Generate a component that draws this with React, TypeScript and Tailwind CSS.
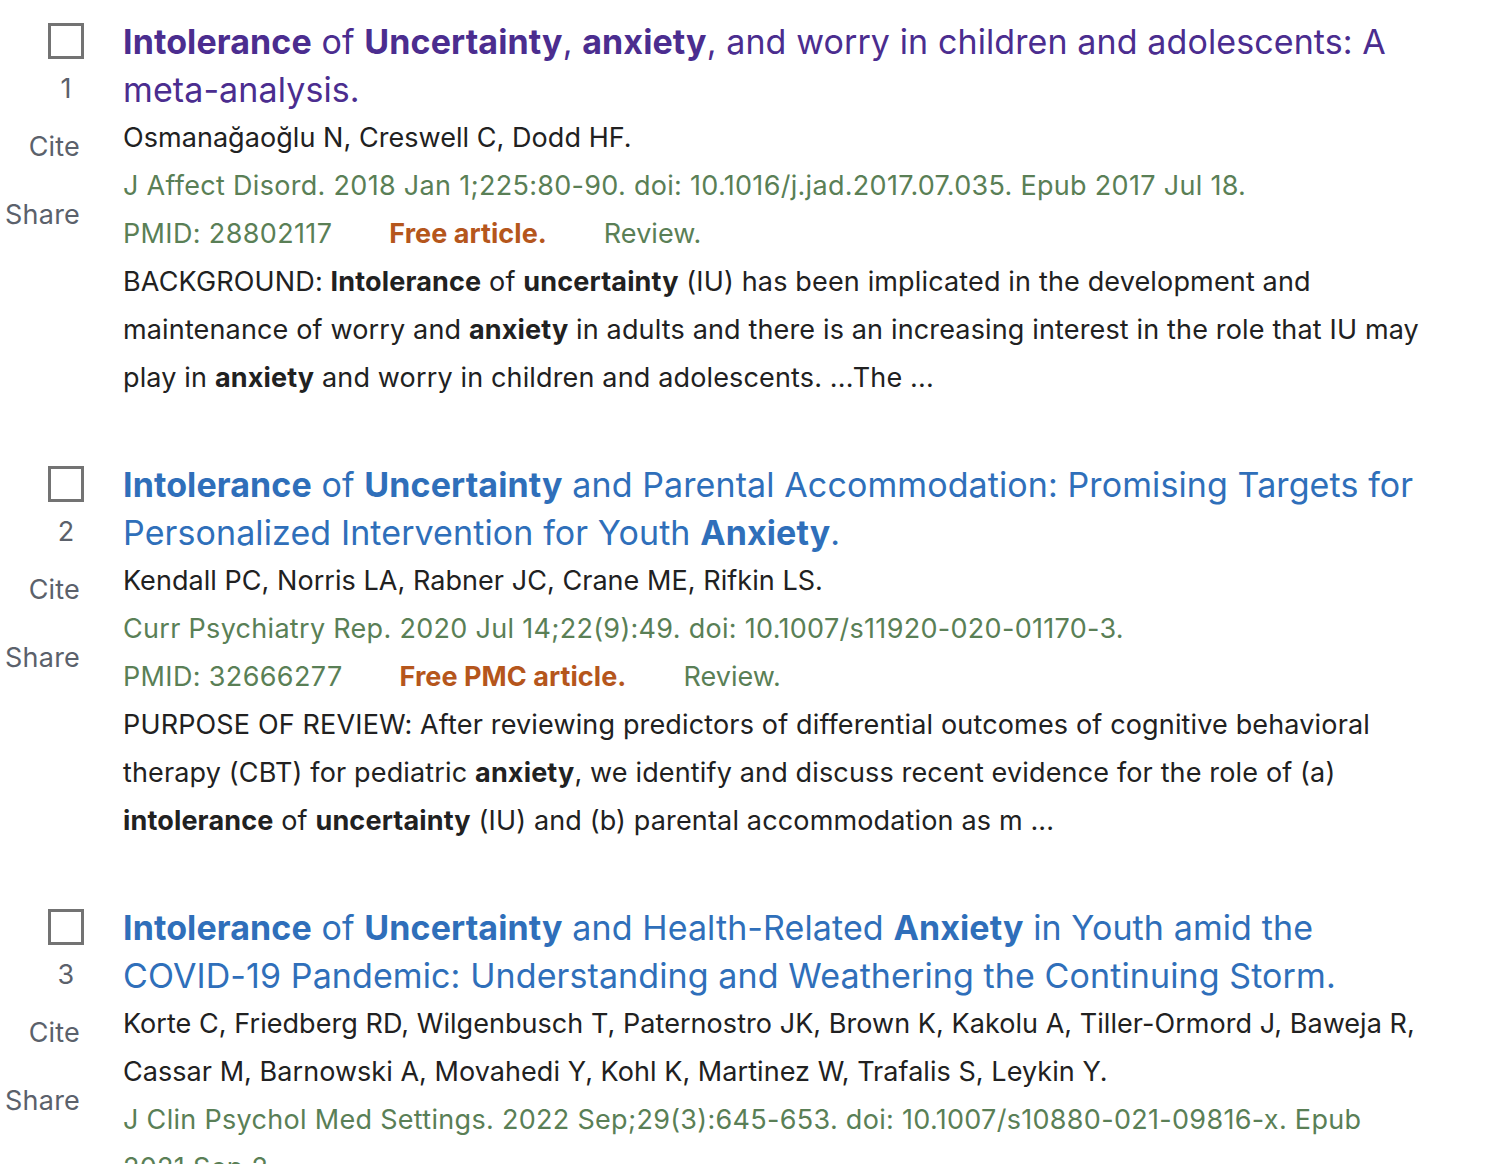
import React from "react";

type Part = string | { b: string };

type Doc = {
  n: number;
  visited?: boolean;
  title: Part[];
  authors: string;
  citation: string;
  pmid?: string;
  free?: string;
  review?: boolean;
  snippet?: Part[];
};

const docs: Doc[] = [
  {
    n: 1,
    visited: true,
    title: [{ b: "Intolerance" }, " of ", { b: "Uncertainty" }, ", ", { b: "anxiety" }, ", and worry in children and adolescents: A meta-analysis."],
    authors: "Osmanağaoğlu N, Creswell C, Dodd HF.",
    citation: "J Affect Disord. 2018 Jan 1;225:80-90. doi: 10.1016/j.jad.2017.07.035. Epub 2017 Jul 18.",
    pmid: "28802117",
    free: "Free article.",
    review: true,
    snippet: [
      "BACKGROUND: ",
      { b: "Intolerance" },
      " of ",
      { b: "uncertainty" },
      " (IU) has been implicated in the development and maintenance of worry and ",
      { b: "anxiety" },
      " in adults and there is an increasing interest in the role that IU may play in ",
      { b: "anxiety" },
      " and worry in children and adolescents. ...The ...",
    ],
  },
  {
    n: 2,
    title: [{ b: "Intolerance" }, " of ", { b: "Uncertainty" }, " and Parental Accommodation: Promising Targets for Personalized Intervention for Youth ", { b: "Anxiety" }, "."],
    authors: "Kendall PC, Norris LA, Rabner JC, Crane ME, Rifkin LS.",
    citation: "Curr Psychiatry Rep. 2020 Jul 14;22(9):49. doi: 10.1007/s11920-020-01170-3.",
    pmid: "32666277",
    free: "Free PMC article.",
    review: true,
    snippet: [
      "PURPOSE OF REVIEW: After reviewing predictors of differential outcomes of cognitive behavioral therapy (CBT) for pediatric ",
      { b: "anxiety" },
      ", we identify and discuss recent evidence for the role of (a) ",
      { b: "intolerance" },
      " of ",
      { b: "uncertainty" },
      " (IU) and (b) parental accommodation as m ...",
    ],
  },
  {
    n: 3,
    title: [{ b: "Intolerance" }, " of ", { b: "Uncertainty" }, " and Health-Related ", { b: "Anxiety" }, " in Youth amid the COVID-19 Pandemic: Understanding and Weathering the Continuing Storm."],
    authors: "Korte C, Friedberg RD, Wilgenbusch T, Paternostro JK, Brown K, Kakolu A, Tiller-Ormord J, Baweja R, Cassar M, Barnowski A, Movahedi Y, Kohl K, Martinez W, Trafalis S, Leykin Y.",
    citation: "J Clin Psychol Med Settings. 2022 Sep;29(3):645-653. doi: 10.1007/s10880-021-09816-x. Epub 2021 Sep 2.",
  },
];

function Rich({ parts }: { parts: Part[] }) {
  return (
    <>
      {parts.map((p, i) =>
        typeof p === "string" ? <span key={i}>{p}</span> : <b key={i} className="font-bold">{p.b}</b>
      )}
    </>
  );
}

function DocSum({ doc }: { doc: Doc }) {
  return (
    <article className="flex">
      {/* left actions column */}
      <div className="w-[84px] shrink-0 flex flex-col items-end text-[27px] leading-[36px] tracking-[0.2px] text-[#5b616b]">
        <div className="mt-[5px] w-[36px] h-[36px] border-[3px] border-[#737373] bg-white" />
        <div className="mt-[12px] w-[36px] text-center">{doc.n}</div>
        <div className="mt-[22px] pr-[4px]">Cite</div>
        <div className="mt-[32px] pr-[4px]">Share</div>
      </div>

      <div className="ml-[39px] w-[1298px] text-[27px] leading-[48px] tracking-[0.05px] text-[#212121]">
        <a
          href="#"
          className={`block text-[34px] leading-[48px] tracking-[0.1px] ${doc.visited ? "text-[#4b2d8f]" : "text-[#2f6fba]"}`}
        >
          <Rich parts={doc.title} />
        </a>
        <div>{doc.authors}</div>
        <div className="text-[#5a7f56] tracking-[0.3px]">{doc.citation}</div>
        {doc.pmid && (
          <div className="flex gap-[57px] text-[#5a7f56]">
            <span className="tracking-[0.35px]">PMID: {doc.pmid}</span>
            {doc.free && <span className="font-bold text-[#b5561c]">{doc.free}</span>}
            {doc.review && <span>Review.</span>}
          </div>
        )}
        {doc.snippet && (
          <div className="tracking-[0.15px]">
            <Rich parts={doc.snippet} />
          </div>
        )}
      </div>
    </article>
  );
}

export default function App() {
  return (
    <div className="min-h-screen bg-white font-['Inter','Roboto',sans-serif] pt-[18px] flex flex-col gap-[59px] overflow-hidden">
      {docs.map((d) => (
        <DocSum key={d.n} doc={d} />
      ))}
    </div>
  );
}
